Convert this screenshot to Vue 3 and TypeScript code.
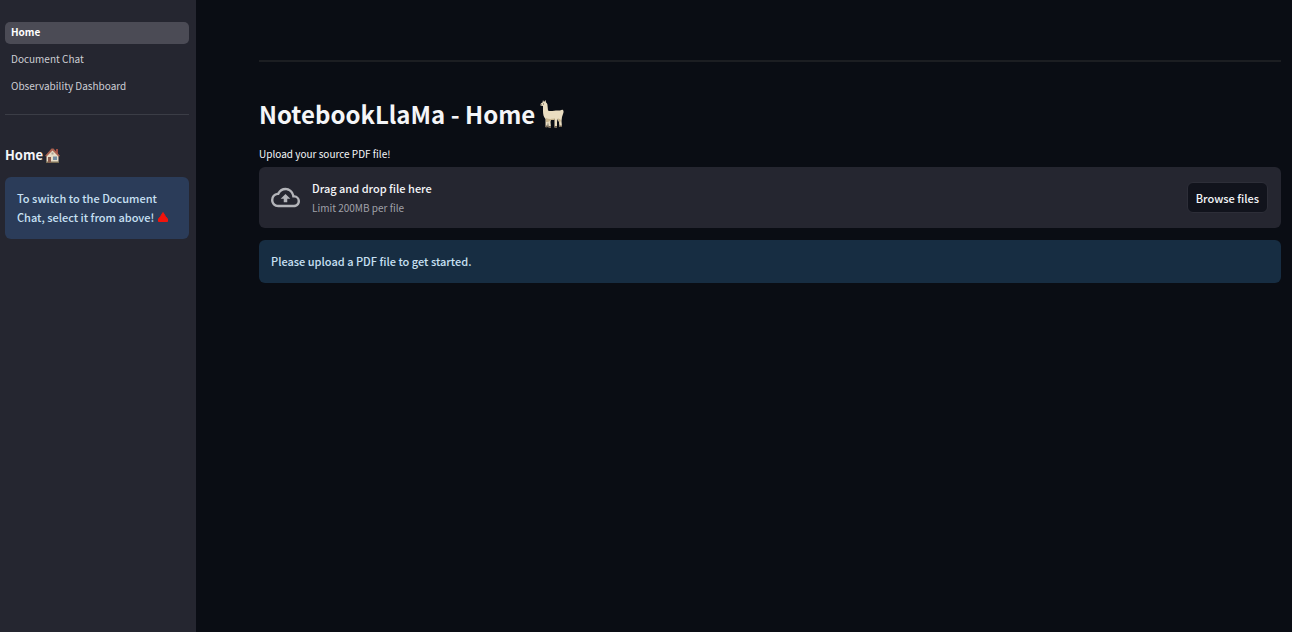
<script setup lang="ts">
import { ref } from 'vue'

interface Page {
  label: string
  href: string
}

const pages: Page[] = [
  { label: 'Home', href: '#home' },
  { label: 'Document Chat', href: '#document-chat' },
  { label: 'Observability Dashboard', href: '#observability-dashboard' },
]

const active = ref('Home')
const picker = ref<HTMLInputElement | null>(null)

function browse(): void {
  picker.value?.click()
}
</script>

<template>
  <div class="app">
    <aside class="sidebar">
      <nav class="nav">
        <a
          v-for="page in pages"
          :key="page.label"
          :href="page.href"
          class="nav-link"
          :class="{ active: active === page.label }"
          @click.prevent="active = page.label"
        >{{ page.label }}</a>
      </nav>
      <hr class="rule" />
      <h2 class="side-title">
        <span>Home</span>
        <svg class="house" viewBox="0 0 17 17" role="img" aria-label="house">
          <path d="M12 2h2v5h-2z" fill="#9c4c42" />
          <path d="M2.5 8 8 2.5 14.5 8v7.500h-12z" fill="#e6dcc5" />
          <path d="M1 9 7.500 1.500 9.500 1.500 16 9 14.500 9.500 8.500 3.500 2.500 9.500z" fill="#a9614f" />
          <path d="M2 14.500h13v1.500H2z" fill="#786c53" />
          <path d="M4 10h3v5.500H4z" fill="#87594c" />
          <path d="M9 9.500h4v3.500H9z" fill="#718ca0" />
          <path d="M7.500 5.500h2v2h-2z" fill="#a9a08f" />
        </svg>
      </h2>
      <div class="side-note">
        To switch to the Document Chat, select it from above!
        <svg class="triangle" viewBox="0 0 12 12" role="img" aria-label="up">
          <path d="M6 1.500 8.500 5.500 10.500 8v2.500h-9V8L3.500 5.500z" fill="#f0140c" stroke="#f0140c" stroke-width="1" stroke-linejoin="round" />
        </svg>
      </div>
    </aside>

    <main class="main">
      <hr class="main-rule" />
      <h1 class="title">
        <span>NotebookLlaMa - Home</span>
        <svg class="llama" viewBox="0 0 26 30" role="img" aria-label="llama">
          <path
            d="M4 1 5 3 6.500 1 7 3.500C8 4 8.500 5 8.500 6.500L9 11.500C12 13 16 11 20 11.500 22 11.500 22.500 10 24 11 25 12 24.500 14 24 15L23 18 22.500 22 23 28H20.500L20 23 18.500 20 18 23V28.500H15.500L15.500 20H12L11.500 23 12 28.500H9.500L9 23 8.500 28H6.500L6.500 20C4.500 18 4 15 4 12L4 7 1.500 6.500C1 5 2 4 3.500 3.500Z"
            fill="#eaddc1"
          />
          <path d="M7 19C10 20.500 14 20 16 19L15.500 21H12L11 22 9 23H7zM18.500 19 22 21 21 24 20 23z" fill="#c8b58e" />
          <path d="M6.500 26.500h2V28.500h-2zM9.500 27h2.500v1.500H9.500zM15.500 27H18v1.500h-2.500zM20.500 26.500H23V28h-2.500z" fill="#756551" />
          <path d="M4 4.500h1v1H4zM1.500 5h1v1h-1z" fill="#55483b" />
        </svg>
      </h1>
      <label class="upload-label" for="source-file">Upload your source PDF file!</label>
      <section class="dropzone">
        <svg class="cloud" viewBox="0 0 24 24" aria-hidden="true">
          <path
            d="M19.350 10.040A7.490 7.490 0 0 0 12 4C9.110 4 6.600 5.640 5.350 8.040A5.994 5.994 0 0 0 0 14c0 3.310 2.690 6 6 6h13c2.760 0 5-2.240 5-5 0-2.640-2.050-4.780-4.650-4.960zM19 18H6c-2.210 0-4-1.790-4-4 0-2.050 1.530-3.760 3.560-3.970l1.070-.110.500-.950A5.469 5.469 0 0 1 12 6c2.620 0 4.880 1.860 5.390 4.430l.300 1.500 1.530.110A2.980 2.980 0 0 1 22 15c0 1.650-1.350 3-3 3zM8 13h2.550v3h2.900v-3H16l-4-4z"
            fill="currentColor"
          />
        </svg>
        <div class="drop-text">
          <span>Drag and drop file here</span>
          <span class="drop-limit">Limit 200MB per file</span>
        </div>
        <input id="source-file" ref="picker" type="file" accept="application/pdf" hidden />
        <button type="button" class="browse" @click="browse">Browse files</button>
      </section>
      <div class="info" role="status">Please upload a PDF file to get started.</div>
    </main>
  </div>
</template>

<style>
body {
  background: #0a0d14;
}
</style>

<style scoped>
.app {
  display: flex;
  min-height: 100vh;
  box-sizing: border-box;
  background: #0a0d14;
  color: #f4f5f8;
  font-family: "Noto Sans CJK SC", "Noto Sans", sans-serif;
  font-size: 11px;
  font-weight: 500;
  line-height: 20px;
}

.sidebar {
  flex: 0 0 196px;
  box-sizing: border-box;
  padding: 22px 7px 0 5px;
  background: #252630;
}

.nav {
  display: flex;
  flex-direction: column;
  gap: 5px;
}

.nav-link {
  padding: 0 6px 2px;
  border-radius: 5px;
  color: #cdced4;
  font-size: 10px;
  font-weight: 400;
  text-decoration: none;
}

.nav-link.active {
  background: #4b4b55;
  color: #ffffff;
  font-weight: 700;
}

.rule,
.main-rule {
  height: 1px;
  margin: 0;
  border: 0;
  background: #3b3d46;
}

.rule {
  margin-top: 16px;
}

.side-title {
  display: flex;
  align-items: center;
  gap: 1px;
  margin: 30px 0 12px;
  font-size: 13px;
  font-weight: 700;
  line-height: 20px;
}

.house {
  width: 17px;
  height: 17px;
}

.side-note {
  padding: 12px;
  border-radius: 6px;
  background: #2b3c59;
  color: #c8e0f4;
  line-height: 19px;
}

.triangle {
  width: 12px;
  height: 12px;
  vertical-align: -1px;
}

.main {
  flex: 1;
  min-width: 0;
  padding: 60px 11px 0 63px;
}

.main-rule {
  height: 2px;
  background: #1c1e22;
}

.title {
  display: flex;
  align-items: center;
  gap: 4px;
  margin: 32px 0 10px;
  font-size: 24px;
  font-weight: 700;
  line-height: 40px;
}

.llama {
  width: 26px;
  height: 30px;
}

.upload-label {
  display: block;
  margin-bottom: 3px;
  font-size: 10px;
  font-weight: 400;
}

.dropzone {
  display: flex;
  align-items: center;
  padding: 11px 13px 11px 12px;
  border-radius: 6px;
  background: #252630;
}

.cloud {
  width: 29px;
  height: 29px;
  margin-right: 12px;
  color: #b3b4b9;
}

.drop-text {
  display: flex;
  flex: 1;
  flex-direction: column;
}

.drop-limit {
  color: #a0a1a8;
  font-size: 10px;
  font-weight: 400;
  line-height: 19px;
}

.browse {
  height: 31px;
  padding: 0 8px;
  border: 1px solid #2d2e38;
  border-radius: 6px;
  background: #11131c;
  color: #f4f5f8;
  font: inherit;
}

.info {
  margin-top: 12px;
  padding: 11px 12px 12px;
  border-radius: 6px;
  background: #172d42;
  color: #c8e0f4;
}
</style>
